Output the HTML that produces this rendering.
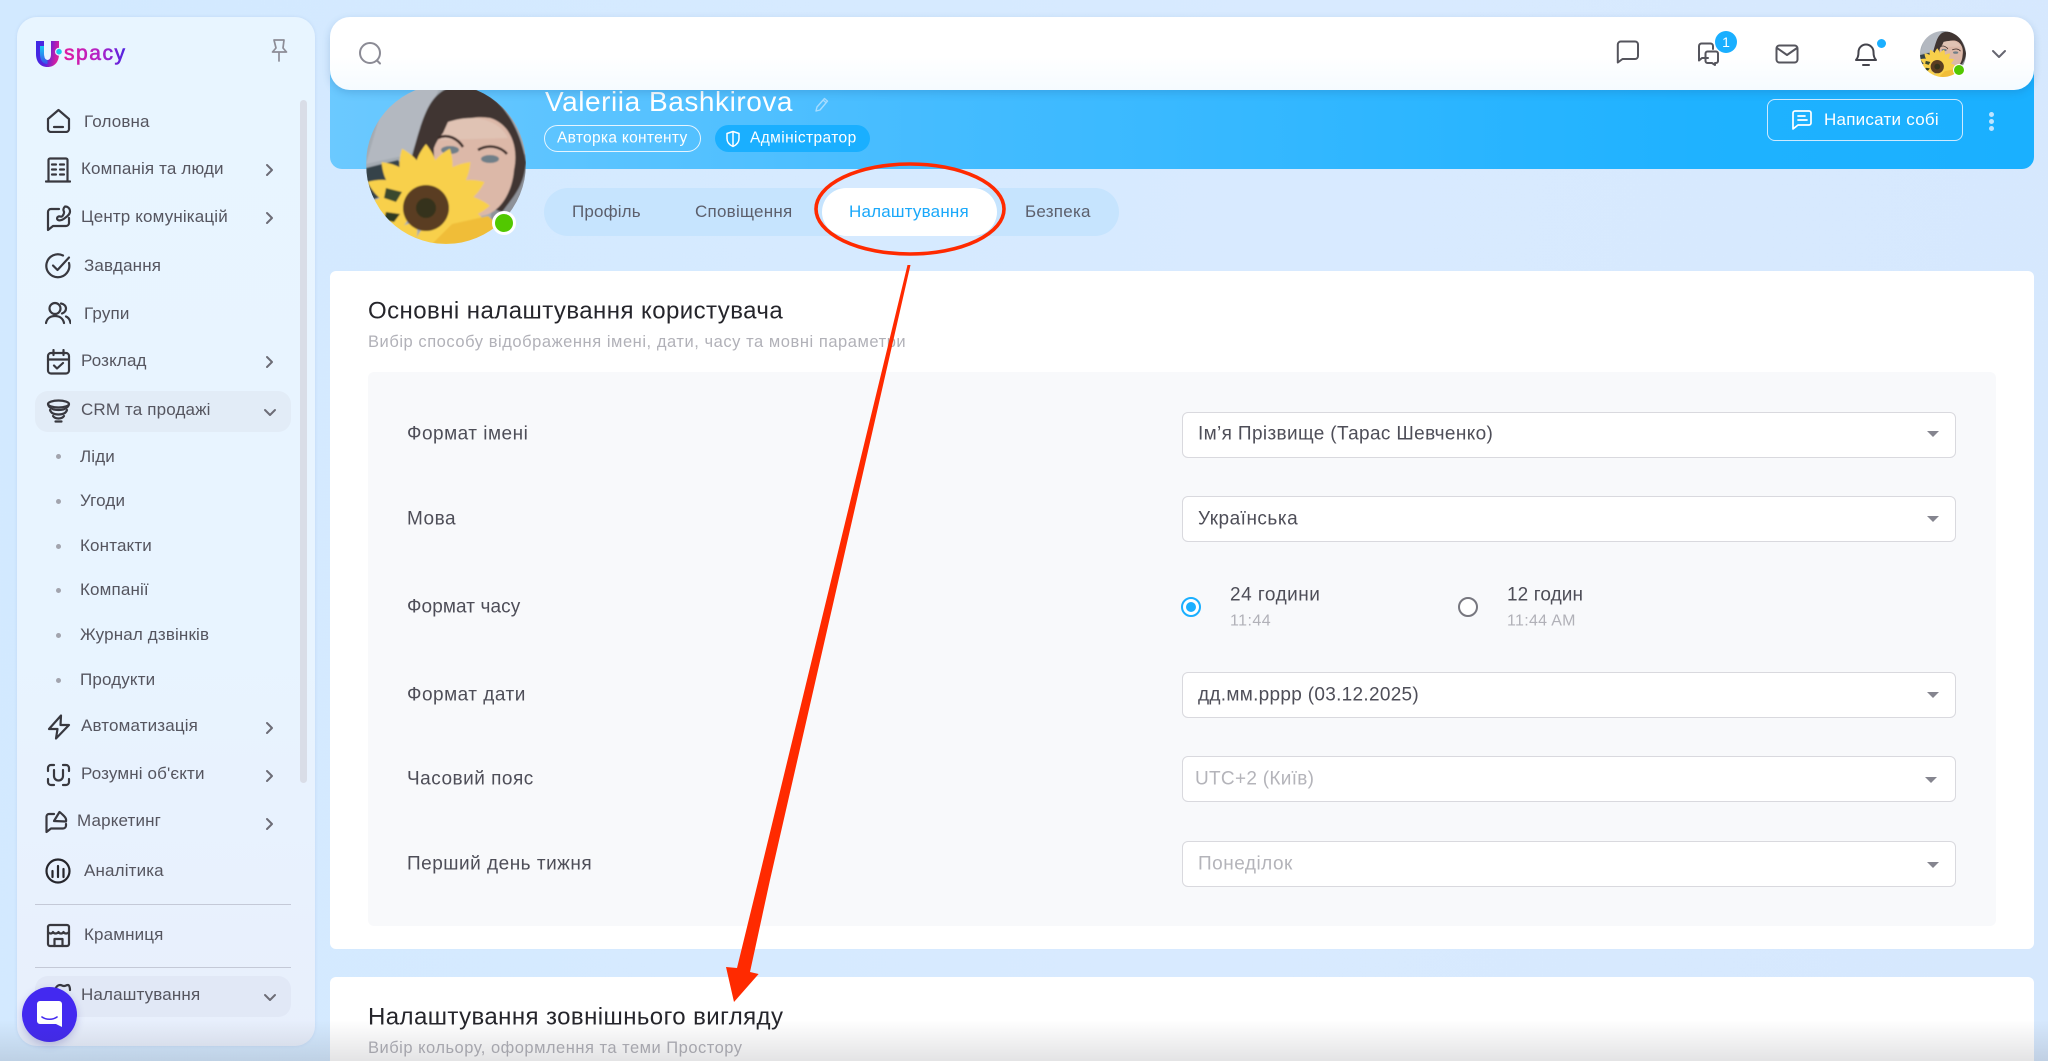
<!DOCTYPE html>
<html lang="uk"><head><meta charset="utf-8"><title>Uspacy</title>
<style>
*{box-sizing:border-box}
html,body{margin:0;padding:0;width:2048px;height:1061px;overflow:hidden}
body{position:relative;font-family:"Liberation Sans","DejaVu Sans",sans-serif;color:#4e4e5a;background:linear-gradient(100deg,#d2e9ff 0%,#d8eaff 60%,#d6e8fd 100%)}
.a{position:absolute}
.t{position:absolute;white-space:nowrap;transform:translateY(-50%);line-height:1.2;margin-top:1px}
.n{font-size:17px;letter-spacing:.15px;color:#55555f}
.l{font-size:19px;letter-spacing:.5px;color:#4e4e58;margin-top:2px}
.sel{position:absolute;left:1182px;width:774px;height:46px;background:#fff;border:1px solid #d9d9de;border-radius:6px}
.arr{position:absolute;left:1927px;width:0;height:0;border-left:6px solid transparent;border-right:6px solid transparent;border-top:6px solid #85858f}
.i{position:absolute;fill:none;stroke:#38383f;stroke-width:2.2;stroke-linecap:round;stroke-linejoin:round}
.dot{position:absolute;left:56px;width:5px;height:5px;border-radius:50%;background:#a2a4ae}
.ch{position:absolute;fill:none;stroke:#6c6c76;stroke-width:2;stroke-linecap:round;stroke-linejoin:round}
</style></head>
<body>
<svg width="0" height="0" style="position:absolute"><defs>
<clipPath id="ac"><circle cx="80" cy="80" r="80"/></clipPath>
<filter id="soft" x="-5%" y="-5%" width="110%" height="110%"><feGaussianBlur stdDeviation=".8"/></filter>
<g id="petal"><path d="M0 -18 C-16 -30 -13 -48 0 -64 C13 -48 16 -30 0 -18Z" fill="#f8d04c"/></g>
<symbol id="ava" viewBox="0 0 160 160"><g clip-path="url(#ac)"><g filter="url(#soft)">
<rect width="160" height="160" fill="#a4abb2"/>
<path d="M20 10 L75 0 L45 70 L0 80Z" fill="#b3b8c0"/>
<rect x="125" y="70" width="35" height="70" fill="#8e9299"/>
<path d="M44 80 C56 34 62 14 80 5 C115 -6 150 22 160 78 C158 102 148 112 136 128 L60 100Z" fill="#3f3431"/>
<path d="M68 64 C76 42 100 30 124 34 C144 40 153 62 148 86 C146 112 130 134 110 132 C88 124 66 92 68 64Z" fill="#dcb8a8"/>
<path d="M82 38 C106 30 132 34 142 54 L74 56Z" fill="#e0c3b4"/>
<path d="M72 54 C82 49 92 55 97 63" stroke="#3a2c28" stroke-width="2.600" fill="none"/>
<path d="M112 66 C122 60 134 62 141 70" stroke="#3a2c28" stroke-width="2.600" fill="none"/>
<ellipse cx="84" cy="66" rx="9" ry="4" fill="#6f7f88"/><ellipse cx="124" cy="75" rx="9" ry="4" fill="#6f7f88"/>
<path d="M0 84 L32 76 L50 100 L0 118Z" fill="#34424a"/>
<g transform="translate(18 134)"><use href="#petal" transform="rotate(-50)"/><use href="#petal" transform="rotate(-85)"/><use href="#petal" transform="rotate(-120)"/><use href="#petal" transform="rotate(160)"/></g>
<g transform="translate(60 124)">
<use href="#petal" transform="rotate(0)"/><use href="#petal" transform="rotate(-22)"/><use href="#petal" transform="rotate(-44)"/><use href="#petal" transform="rotate(-66)"/><use href="#petal" transform="rotate(-90)"/><use href="#petal" transform="rotate(-112)"/><use href="#petal" transform="rotate(22)"/><use href="#petal" transform="rotate(44)"/><use href="#petal" transform="rotate(66)"/><use href="#petal" transform="rotate(88)"/><use href="#petal" transform="rotate(105)"/><use href="#petal" transform="rotate(130)"/><use href="#petal" transform="rotate(155)"/><use href="#petal" transform="rotate(180)"/><use href="#petal" transform="rotate(-145)"/>
<circle r="23" fill="#5a3d20"/><circle r="10" fill="#34301f"/></g>
<path d="M66 160 L86 140 L122 132 L140 148 L125 160Z" fill="#f0bd38"/>
<path d="M20 104 L36 108 L30 118 L18 114Z" fill="#3b4a2e"/>
<path d="M20 128 L34 130 L28 138 L18 136Z" fill="#2f3a24"/>
</g></g></symbol>
</defs></svg>

<!-- Banner -->
<div class="a" style="left:330px;top:60px;width:1704px;height:109px;border-radius:0 0 12px 12px;background:linear-gradient(90deg,#6bc9ff 0%,#45bcff 35%,#1fb2ff 80%,#1ab0ff 100%)"></div>
<div class="t" style="left:545px;top:101px;font-size:28px;letter-spacing:.55px;color:#fff">Valeriia Bashkirova</div>
<svg class="a" style="left:813px;top:96px" width="18" height="18" viewBox="0 0 18 18" fill="none" stroke="#a6dcff" stroke-width="1.4" stroke-linejoin="round"><path d="M3 15l1-4 7.500-8.500 3 2.600L7 14z"/><path d="M10 4l3 2.600"/></svg>
<div class="a" style="left:544px;top:125px;width:157px;height:27px;border:1px solid #e6f5ff;border-radius:14px"></div>
<div class="t" style="left:557px;top:138px;font-size:15.5px;letter-spacing:.3px;color:#fff">Авторка контенту</div>
<div class="a" style="left:715px;top:125px;width:155px;height:27px;background:#1aafff;border-radius:14px"></div>
<svg class="a" style="left:725px;top:130px" width="16" height="18" viewBox="0 0 16 18" fill="none" stroke="#fff" stroke-width="1.5" stroke-linejoin="round"><path d="M8 1.500l6 2v5c0 4-2.700 6.500-6 8-3.300-1.500-6-4-6-8v-5z"/><path d="M8 2v14"/></svg>
<div class="t" style="left:750px;top:138px;font-size:15.5px;letter-spacing:.4px;color:#fff">Адміністратор</div>
<div class="a" style="left:1767px;top:99px;width:196px;height:42px;border:1px solid #cdeaff;border-radius:8px"></div>
<svg class="a" style="left:1791px;top:109px" width="22" height="22" viewBox="0 0 22 22" fill="none" stroke="#fff" stroke-width="1.7" stroke-linecap="round" stroke-linejoin="round"><path d="M4 2h14a2 2 0 0 1 2 2v10a2 2 0 0 1-2 2H7l-5 4V4a2 2 0 0 1 2-2z"/><path d="M7 7h7M7 11h9"/></svg>
<div class="t" style="left:1824px;top:119px;font-size:17px;letter-spacing:.25px;color:#fff">Написати собі</div>
<div class="a" style="left:1989px;top:112px;width:5px;height:5px;border-radius:50%;background:#bfe4ff"></div>
<div class="a" style="left:1989px;top:119px;width:5px;height:5px;border-radius:50%;background:#bfe4ff"></div>
<div class="a" style="left:1989px;top:126px;width:5px;height:5px;border-radius:50%;background:#bfe4ff"></div>

<!-- Topbar -->
<div class="a" style="left:330px;top:17px;width:1704px;height:73px;border-radius:20px;background:linear-gradient(180deg,#fff 55%,#f5fbff 100%);box-shadow:0 3px 8px rgba(30,90,150,.22)"></div>
<svg class="i" style="left:358px;top:42px;stroke:#8b8b95;stroke-width:2" width="25" height="24" viewBox="0 0 25 24"><circle cx="12" cy="11" r="10"/><path d="M19 18.500l3 3"/></svg>
<svg class="i" style="left:1616px;top:40px;stroke:#55555d;stroke-width:2" width="24" height="24" viewBox="0 0 24 24"><path d="M5 1.500h14a3 3 0 0 1 3 3V16a3 3 0 0 1-3 3H6.500L1.800 22.500V4.500a3 3 0 0 1 3.200-3z"/></svg>
<svg class="i" style="left:1696px;top:42px;stroke:#55555d;stroke-width:2" width="24" height="24" viewBox="0 0 24 24"><path d="M12 16H6l-3 2.500V4a2.500 2.500 0 0 1 2.500-2.500h9A2.500 2.500 0 0 1 17 4v3"/><path d="M12.500 9.500h7.500a2 2 0 0 1 2 2V19a2 2 0 0 1-2 2h-1v2l-3-2h-4.500a2 2 0 0 1-2-2v-7.500a2 2 0 0 1 2-2z"/></svg>
<div class="a" style="left:1715px;top:31px;width:22px;height:22px;border-radius:50%;background:#1aafff;color:#fff;font-size:14px;line-height:22px;text-align:center">1</div>
<svg class="i" style="left:1775px;top:44px;stroke:#55555d;stroke-width:2" width="24" height="20" viewBox="0 0 24 20"><rect x="1.500" y="1.500" width="21" height="17" rx="3"/><path d="M2 4l10 7 10-7"/></svg>
<svg class="i" style="left:1854px;top:41px;stroke:#44444c;stroke-width:2" width="24" height="26" viewBox="0 0 24 26"><path d="M2 19c2-2 2.500-4 2.500-8a7.500 7.500 0 0 1 15 0c0 4 .5 6 2.500 8z"/><path d="M9 24h6"/></svg>
<div class="a" style="left:1877px;top:39px;width:9px;height:9px;border-radius:50%;background:#1aafff"></div>
<svg class="a" style="left:1920px;top:31px" width="46" height="46" viewBox="0 0 160 160"><use href="#ava" width="160" height="160"/></svg>
<div class="a" style="left:1953px;top:64px;width:12px;height:12px;border-radius:50%;background:#52c800;border:1.500px solid #fff"></div>
<svg class="ch" style="left:1991px;top:49px;stroke:#666670" width="16" height="10" viewBox="0 0 16 10"><path d="M2 2l6 6 6-6"/></svg>

<!-- Profile avatar -->
<svg class="a" style="left:366px;top:84px" width="160" height="160" viewBox="0 0 160 160"><use href="#ava" width="160" height="160"/></svg>
<div class="a" style="left:330px;top:17px;width:1704px;height:73px;border-radius:20px;background:linear-gradient(180deg,#fff 55%,#f5fbff 100%);clip-path:inset(50px 1400px 0 30px)"></div>
<div class="a" style="left:492px;top:211px;width:24px;height:24px;border-radius:50%;background:#52c800;border:3px solid #fff"></div>

<!-- Tabs -->
<div class="a" style="left:544px;top:188px;width:575px;height:48px;border-radius:24px;background:#c6e4fe"></div>
<div class="a" style="left:822px;top:188px;width:175px;height:48px;border-radius:24px;background:#fff"></div>
<div class="t" style="left:572px;top:211px;font-size:17px;letter-spacing:.15px;color:#5c5f6c">Профіль</div>
<div class="t" style="left:695px;top:211px;font-size:17px;letter-spacing:.25px;color:#5c5f6c">Сповіщення</div>
<div class="t" style="left:849px;top:211px;font-size:17px;letter-spacing:.2px;color:#1aa8fa">Налаштування</div>
<div class="t" style="left:1025px;top:211px;font-size:17px;letter-spacing:.25px;color:#5c5f6c">Безпека</div>

<!-- Card 1 -->
<div class="a" style="left:330px;top:271px;width:1704px;height:678px;background:#fff;border-radius:6px"></div>
<div class="t" style="left:368px;top:311px;font-size:24px;letter-spacing:.44px;color:#25252b">Основні налаштування користувача</div>
<div class="t" style="left:368px;top:342px;font-size:16.5px;letter-spacing:.55px;color:#b1b1b8">Вибір способу відображення імені, дати, часу та мовні параметри</div>
<div class="a" style="left:368px;top:372px;width:1628px;height:554px;background:#f8f9fb;border-radius:6px"></div>

<div class="t l" style="left:407px;top:433px">Формат імені</div>
<div class="sel" style="top:412px"></div><div class="t l" style="left:1198px;top:433px;letter-spacing:.36px">Ім’я Прізвище (Тарас Шевченко)</div><div class="arr" style="top:431px"></div>
<div class="t l" style="left:407px;top:518px">Мова</div>
<div class="sel" style="top:496px"></div><div class="t l" style="left:1198px;top:518px">Українська</div><div class="arr" style="top:516px"></div>
<div class="t l" style="left:407px;top:606px;letter-spacing:.1px">Формат часу</div>
<div class="a" style="left:1181px;top:597px;width:20px;height:20px;border-radius:50%;border:2px solid #1aafff;background:#fff"></div><div class="a" style="left:1186px;top:602px;width:10px;height:10px;border-radius:50%;background:#1aafff"></div>
<div class="t l" style="left:1230px;top:594px">24 години</div><div class="t" style="left:1230px;top:620px;font-size:16px;letter-spacing:.45px;color:#b1b1b8">11:44</div>
<div class="a" style="left:1458px;top:597px;width:20px;height:20px;border-radius:50%;border:2px solid #77777f;background:#fff"></div>
<div class="t l" style="left:1507px;top:594px;letter-spacing:.1px">12 годин</div><div class="t" style="left:1507px;top:620px;font-size:16px;letter-spacing:.3px;color:#b1b1b8">11:44 AM</div>
<div class="t l" style="left:407px;top:694px">Формат дати</div>
<div class="sel" style="top:672px"></div><div class="t l" style="left:1198px;top:694px;letter-spacing:.3px">дд.мм.рррр (03.12.2025)</div><div class="arr" style="top:692px"></div>
<div class="t l" style="left:407px;top:778px">Часовий пояс</div>
<div class="sel" style="top:756px"></div><div class="t l" style="left:1195px;top:778px;letter-spacing:.3px;color:#b4b4ba">UTC+2 (Київ)</div><div class="arr" style="top:777px;left:1925px"></div>
<div class="t l" style="left:407px;top:863px">Перший день тижня</div>
<div class="sel" style="top:841px"></div><div class="t l" style="left:1198px;top:863px;color:#b4b4ba">Понеділок</div><div class="arr" style="top:862px;left:1927px"></div>

<!-- Card 2 -->
<div class="a" style="left:330px;top:977px;width:1704px;height:90px;background:#fff;border-radius:6px"></div>
<div class="t" style="left:368px;top:1017px;font-size:24px;letter-spacing:.42px;color:#25252b">Налаштування зовнішнього вигляду</div>
<div class="t" style="left:368px;top:1048px;font-size:16.5px;letter-spacing:.5px;color:#b1b1b8">Вибір кольору, оформлення та теми Простору</div>

<!-- Sidebar -->
<div class="a" style="left:17px;top:17px;width:298px;height:1029px;border-radius:20px;background:linear-gradient(180deg,#e8f5ff 0%,#e8f4ff 60%,#e8effc 100%);box-shadow:0 0 3px rgba(120,150,200,.2)"></div>
<!-- logo -->
<svg class="a" style="left:33px;top:38px" width="100" height="34" viewBox="0 0 100 34">
<defs>
<linearGradient id="lg" x1="0" y1="0" x2="1" y2=".2"><stop offset="0" stop-color="#3a28e6"/><stop offset=".55" stop-color="#5a22dc"/><stop offset="1" stop-color="#d81fa0"/></linearGradient>
<linearGradient id="lg2" x1="0" y1="0" x2="0" y2="1"><stop offset="0" stop-color="#18c8f5"/><stop offset="1" stop-color="#3a50ea"/></linearGradient>
<linearGradient id="lg3" gradientUnits="userSpaceOnUse" x1="31" y1="0" x2="92" y2="0"><stop offset="0" stop-color="#e01aa0"/><stop offset=".6" stop-color="#b022c8"/><stop offset="1" stop-color="#5022e0"/></linearGradient>
</defs>
<path d="M3 3h8v13c0 4 1.500 6 3.500 6s3.500-2 3.500-6V3h8v13c0 8-4.500 13-11.500 13S3 24 3 16z" fill="url(#lg)"/>
<path d="M7 8h4v8c0 4 1.500 6 3.500 6v4C9 26 7 21 7 16z" fill="url(#lg2)"/>
<circle cx="26" cy="13.700" r="3.400" fill="#1cc6f0" stroke="#e8f5ff" stroke-width="1.200"/>
<text x="31" y="22" font-family="'Liberation Sans',sans-serif" font-size="21" textLength="61" lengthAdjust="spacing" fill="url(#lg3)" stroke="url(#lg3)" stroke-width=".6">spacy</text>
</svg>
<svg class="i" style="left:268px;top:38px;stroke:#8c8c96;stroke-width:1.700" width="22" height="24" viewBox="0 0 22 24"><path d="M6 2h10l-1 8 3.500 4h-14L8 10zM11 14v9"/></svg>
<div class="a" style="left:300px;top:100px;width:7px;height:683px;border-radius:4px;background:#d9dde7"></div>

<svg class="i" style="left:46px;top:108px" width="25" height="25" viewBox="0 0 25 25"><path d="M2 11L12.500 2 23 11v10a3 3 0 0 1-3 3H5a3 3 0 0 1-3-3z"/><path d="M8 19h9"/></svg>
<div class="t n" style="left:84px;top:121px">Головна</div>

<svg class="i" style="left:45px;top:157px" width="26" height="26" viewBox="0 0 26 26"><path d="M1 24.500h24M3.500 24V3a1.500 1.500 0 0 1 1.500-1.500h16A1.500 1.500 0 0 1 22.500 3v21"/><path d="M7 7.500h4M15 7.500h4M7 12.500h4M15 12.500h4M7 17.500h4M15 17.500h4"/></svg>
<div class="t n" style="left:81px;top:168px">Компанія та люди</div>
<svg class="ch" style="left:265px;top:163px" width="9" height="14" viewBox="0 0 9 14"><path d="M2 2l5 5-5 5"/></svg>

<svg class="i" style="left:46px;top:205px" width="26" height="27" viewBox="0 0 26 27"><path d="M13 4H5a3 3 0 0 0-3 3v18l5-4h13a3 3 0 0 0 3-3v-5"/><path d="M19 1.500c3 0 5 2 5 5s-3 5-5 6.500c-2 1.500-5 3-7 2-1.500-1-1-3 .5-3.500 2-.5 3 1 4-.5 1.500-2 2-4 1-5.500-.5-2 .5-3 1.500-4z"/></svg>
<div class="t n" style="left:81px;top:216px">Центр комунікацій</div>
<svg class="ch" style="left:265px;top:211px" width="9" height="14" viewBox="0 0 9 14"><path d="M2 2l5 5-5 5"/></svg>

<svg class="i" style="left:45px;top:253px" width="26" height="26" viewBox="0 0 26 26"><path d="M24 10a11.500 11.500 0 1 1-6-7.500"/><path d="M8 12.500l4.500 4.500L24 4.500"/></svg>
<div class="t n" style="left:84px;top:265px">Завдання</div>

<svg class="i" style="left:45px;top:301px" width="26" height="24" viewBox="0 0 26 24"><circle cx="10" cy="7.500" r="5.500"/><path d="M1 22c1-5 5-7 9-7s8 2 9 7"/><path d="M16 2.500c3 .5 5 2.500 5 5s-1.500 4-4 5M21 15.500c2.500 1 4 3.500 4.500 6.500"/></svg>
<div class="t n" style="left:84px;top:313px">Групи</div>

<svg class="i" style="left:46px;top:349px" width="25" height="26" viewBox="0 0 25 26"><rect x="2" y="4" width="21" height="20.500" rx="3"/><path d="M2 10.500h21M7.500 1v5M17.500 1v5M8 16.500l3 3 6-5.500"/></svg>
<div class="t n" style="left:81px;top:360px">Розклад</div>
<svg class="ch" style="left:265px;top:355px" width="9" height="14" viewBox="0 0 9 14"><path d="M2 2l5 5-5 5"/></svg>

<div class="a" style="left:35px;top:391px;width:256px;height:41px;border-radius:13px;background:#e2ecf7"></div>
<svg class="i" style="left:46px;top:399px" width="25" height="24" viewBox="0 0 25 24"><ellipse cx="12.500" cy="5" rx="10.500" ry="3.500"/><path d="M2 5c0 0 .5 6 10.500 6S23 5 23 5M4 11c1 3 4 4.500 8.500 4.500S20 14 21 11M7 17c1 1.500 3 2.500 5.500 2.500S17 18.500 18 17M9.500 22.500h6"/></svg>
<div class="t n" style="left:81px;top:409px">CRM та продажі</div>
<svg class="ch" style="left:263px;top:408px" width="14" height="9" viewBox="0 0 14 9"><path d="M2 2l5 5 5-5"/></svg>

<div class="dot" style="top:454px"></div><div class="t n" style="left:80px;top:456px">Ліди</div>
<div class="dot" style="top:499px"></div><div class="t n" style="left:80px;top:500px">Угоди</div>
<div class="dot" style="top:544px"></div><div class="t n" style="left:80px;top:545px">Контакти</div>
<div class="dot" style="top:588px"></div><div class="t n" style="left:80px;top:589px">Компанії</div>
<div class="dot" style="top:633px"></div><div class="t n" style="left:80px;top:634px">Журнал дзвінків</div>
<div class="dot" style="top:678px"></div><div class="t n" style="left:80px;top:679px">Продукти</div>

<svg class="i" style="left:47px;top:714px" width="24" height="26" viewBox="0 0 24 26"><path d="M14 1.500L2 15h8.500L9 24.500 22 11h-8.500z"/></svg>
<div class="t n" style="left:81px;top:725px">Автоматизація</div>
<svg class="ch" style="left:265px;top:721px" width="9" height="14" viewBox="0 0 9 14"><path d="M2 2l5 5-5 5"/></svg>

<svg class="i" style="left:46px;top:763px" width="25" height="24" viewBox="0 0 25 24"><path d="M2 8V5a3 3 0 0 1 3-3h3M17 2h3a3 3 0 0 1 3 3v3M23 16v3a3 3 0 0 1-3 3h-3M8 22H5a3 3 0 0 1-3-3v-3"/><path d="M8 7v6a4.500 4.500 0 0 0 9 0V7"/></svg>
<div class="t n" style="left:81px;top:773px">Розумні об'єкти</div>
<svg class="ch" style="left:265px;top:769px" width="9" height="14" viewBox="0 0 9 14"><path d="M2 2l5 5-5 5"/></svg>

<svg class="i" style="left:45px;top:810px" width="23" height="24" viewBox="0 0 23 24"><path d="M9 4H4a2.500 2.500 0 0 0-2.500 2.500V22l4.500-3.500h12a3 3 0 0 0 3-3V14"/><path d="M14.500 2L9 11l12 .5c.5-2-.5-4-2-5.500-1.500-1.500-3-3-4.500-4z"/></svg>
<div class="t n" style="left:77px;top:820px">Маркетинг</div>
<svg class="ch" style="left:265px;top:817px" width="9" height="14" viewBox="0 0 9 14"><path d="M2 2l5 5-5 5"/></svg>

<svg class="i" style="left:45px;top:858px;stroke:#26262c" width="26" height="26" viewBox="0 0 26 26"><circle cx="13" cy="13" r="11.500"/><path d="M7.500 13v6M13 8v11M18.500 11v8"/></svg>
<div class="t n" style="left:84px;top:870px">Аналітика</div>

<div class="a" style="left:35px;top:904px;width:256px;height:1px;background:#c4c9d7"></div>
<svg class="i" style="left:46px;top:923px" width="25" height="25" viewBox="0 0 25 25"><rect x="2" y="2" width="21" height="21" rx="2"/><path d="M2 9c1.500 2 4 2 5 0 1 2 4 2 5.500 0 1 2 4 2 5 0 1 2 4 2 5.500 0M8.500 23v-7h8v7"/></svg>
<div class="t n" style="left:84px;top:934px">Крамниця</div>
<div class="a" style="left:35px;top:967px;width:256px;height:1px;background:#c4c9d7"></div>

<div class="a" style="left:35px;top:976px;width:256px;height:41px;border-radius:13px;background:#e1e8f6"></div>
<svg class="i" style="left:52px;top:983px" width="20" height="14" viewBox="0 0 20 14"><path d="M2 12c0-6 3-10 6-10 2 0 2 1 4 1s2-1 4-1c1 0 2 2 2 5"/></svg>
<div class="t n" style="left:81px;top:994px">Налаштування</div>
<svg class="ch" style="left:263px;top:993px" width="14" height="9" viewBox="0 0 14 9"><path d="M2 2l5 5 5-5"/></svg>

<!-- Chat button -->
<div class="a" style="left:22px;top:987px;width:55px;height:55px;border-radius:50%;background:#4329f0;box-shadow:0 3px 8px rgba(60,50,160,.25)"></div>
<svg class="a" style="left:36px;top:1000px" width="27" height="28" viewBox="0 0 27 28"><path d="M4 1h19a3 3 0 0 1 3 3v23l-6-3H4a3 3 0 0 1-3-3V4a3 3 0 0 1 3-3z" fill="#fff"/><path d="M6 17c4 3 11 3 15 0" fill="none" stroke="#4329f0" stroke-width="1.600" stroke-linecap="round"/></svg>

<!-- Annotation -->
<svg class="a" style="left:0;top:0" width="2048" height="1061" viewBox="0 0 2048 1061">
<ellipse cx="910" cy="209" rx="94" ry="45" fill="none" stroke="#ff2a00" stroke-width="3.600"/>
<path d="M907.500 265 L910.500 265 L770 880 L750 972 L758.600 974 L734 1002 L726 967 L737 968 L758.500 880Z" fill="#ff2a00"/>
</svg>

<!-- Bottom fade -->
<div class="a" style="left:0;top:1020px;width:2048px;height:41px;background:linear-gradient(180deg,rgba(60,60,70,0),rgba(60,60,70,.14))"></div>
</body></html>
